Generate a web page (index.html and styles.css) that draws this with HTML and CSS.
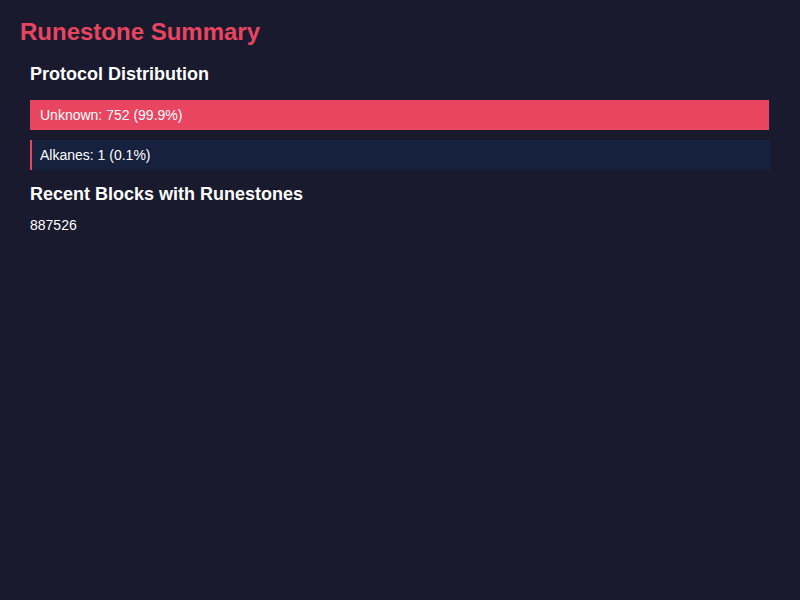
FILE: index.html
```html
<!DOCTYPE html>
<html lang="en">
<head>
<meta charset="utf-8">
<title>Runestone Summary</title>
<link rel="stylesheet" href="styles.css">
</head>
<body>
<main class="page">
  <h1 class="title">Runestone Summary</h1>
  <section class="section">
    <h2 class="section-title">Protocol Distribution</h2>
    <div class="bars">
      <div class="bar">
        <div class="bar-fill" style="width: 99.9%"></div>
        <span class="bar-label">Unknown: 752 (99.9%)</span>
      </div>
      <div class="bar">
        <div class="bar-fill" style="width: 0.1%"></div>
        <span class="bar-label">Alkanes: 1 (0.1%)</span>
      </div>
    </div>
    <h2 class="section-title recent">Recent Blocks with Runestones</h2>
    <div class="block-list">
      <div class="block">887526</div>
    </div>
  </section>
</main>
</body>
</html>
```
FILE: styles.css
```css
html, body {
  margin: 0;
  padding: 0;
  background: #1a1a2e;
  color: #eeeeee;
  font-family: "Liberation Sans", Arial, sans-serif;
}

.page {
  padding: 20px 20px;
}

.title {
  margin: 0;
  font-size: 24px;
  line-height: 24px;
  font-weight: 700;
  color: #e94560;
}

.section {
  padding: 0 10px;
}

.section-title {
  margin: 19px 0 0;
  font-size: 18px;
  line-height: 22px;
  font-weight: 700;
  color: #ffffff;
}

.bars {
  display: flex;
  flex-direction: column;
  gap: 10px;
  margin-top: 15px;
}

.bar {
  display: grid;
  height: 30px;
  background: #16213e;
}

.bar-fill,
.bar-label {
  grid-area: 1 / 1;
}

.bar-fill {
  min-width: 2px;
  height: 100%;
  background: #e94560;
}

.bar-label {
  align-self: center;
  padding: 0 10px;
  font-size: 14px;
  line-height: 16px;
  color: #ffffff;
}

.recent {
  margin-top: 13px;
}

.block-list {
  margin-top: 11px;
}

.block {
  font-size: 14px;
  line-height: 18px;
  color: #ffffff;
}
```
